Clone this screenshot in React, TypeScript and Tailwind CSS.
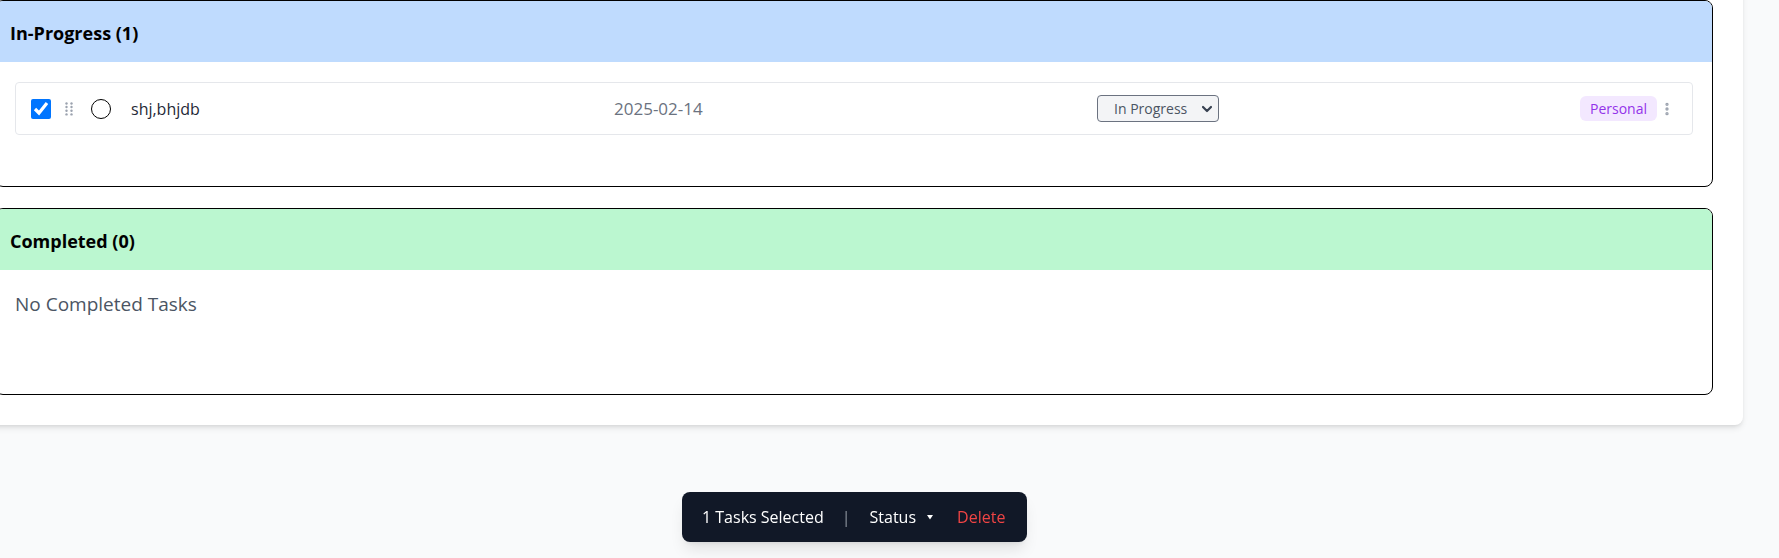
import { EllipsisVertical } from "lucide-react";

const groups = [
  {
    title: "In-Progress",
    header: "bg-[#bfdbfe]",
    tasks: [{ id: 1, title: "shj,bhjdb", date: "2025-02-14", status: "In Progress", tag: "Personal" }],
    empty: "No In-Progress Tasks",
  },
  {
    title: "Completed",
    header: "bg-[#bbf7d0]",
    tasks: [] as { id: number; title: string; date: string; status: string; tag: string }[],
    empty: "No Completed Tasks",
  },
];

function Grip() {
  return (
    <svg width="8" height="14" viewBox="0 0 8 14" className="text-[#9ca3af]">
      {[1.5, 5, 8.8, 12.4].map((y) =>
        [1.5, 6.5].map((x) => <circle key={`${x}-${y}`} cx={x} cy={y} r="1.2" fill="currentColor" />)
      )}
    </svg>
  );
}

export default function App() {
  return (
    <div className="min-h-screen overflow-hidden bg-[#f9fafb] font-['Open_Sans','Liberation_Sans',sans-serif]">
      <div className="-ml-[35px] -mt-[30px] w-[1778px] rounded-lg bg-white p-[30px] shadow-md">
        <div className="flex flex-col gap-[21px]">
          {groups.map((g) => (
            <section key={g.title} className="overflow-hidden rounded-lg border border-black">
              <div className={`flex h-[61px] items-center pl-[14px] pt-[3px] ${g.header}`}>
                <h2 className="text-lg font-bold text-black">
                  {g.title} ({g.tasks.length})
                </h2>
              </div>
              <div className="min-h-[124px] px-[19px] pt-5 pb-4">
                {g.tasks.length === 0 && <p className="text-[19px] leading-7 text-[#4b5563]">{g.empty}</p>}
                {g.tasks.map((t) => (
                  <div
                    key={t.id}
                    className="flex items-center rounded border border-[#e5e7eb] bg-white py-3 pl-[15px] pr-[17px]"
                  >
                    <input type="checkbox" defaultChecked className="h-5 w-5 shrink-0 accent-[#0075ff]" />
                    <span className="ml-[13px] flex w-[10px] justify-center">
                      <Grip />
                    </span>
                    <span className="ml-[17px] h-5 w-5 shrink-0 rounded-full border-[1.5px] border-black" />
                    <span className="ml-5 flex-1 text-base text-[#1f2937]">{t.title}</span>
                    <span className="flex-1 text-[17px] text-[#6b7280]">{t.date}</span>
                    <div className="flex-1">
                      <div className="relative w-[122px]">
                        <select
                          defaultValue={t.status}
                          className="h-[27px] w-full appearance-none rounded border border-[#6b7280] bg-[#f3f4f6] pl-4 text-sm text-[#4b5563]"
                        >
                          <option>To Do</option>
                          <option>In Progress</option>
                          <option>Completed</option>
                        </select>
                        <svg
                          className="pointer-events-none absolute right-[6px] top-1/2 -translate-y-1/2 text-[#374151]"
                          width="12"
                          height="8"
                          viewBox="0 0 12 8"
                          fill="none"
                        >
                          <path d="M2 2l4 4 4-4" stroke="currentColor" strokeWidth="2.2" strokeLinecap="round" strokeLinejoin="round" />
                        </svg>
                      </div>
                    </div>
                    <span className="flex h-[25px] items-center rounded-md bg-[#f3e8ff] px-2.5 text-sm text-[#9333ea]">
                      {t.tag}
                    </span>
                    <EllipsisVertical className="ml-[2px] h-4 w-4 text-[#9ca3af]" strokeWidth={3} />
                  </div>
                ))}
              </div>
            </section>
          ))}
        </div>
      </div>

      <div className="fixed bottom-4 left-[682px] flex h-[50px] items-center whitespace-nowrap rounded-lg bg-[#111827] pl-5 pr-[22px] text-base text-white shadow-lg">
        <span>1 Tasks Selected</span>
        <span className="ml-[18px] text-[#8b929c]">|</span>
        <button className="ml-[19px] flex items-center">
          Status
          <svg className="ml-[11px]" width="6" height="5" viewBox="0 0 6 5">
            <path d="M0 0h6L3 4.5z" fill="currentColor" />
          </svg>
        </button>
        <button className="ml-[24px] text-[#ef4444]">Delete</button>
      </div>
    </div>
  );
}
